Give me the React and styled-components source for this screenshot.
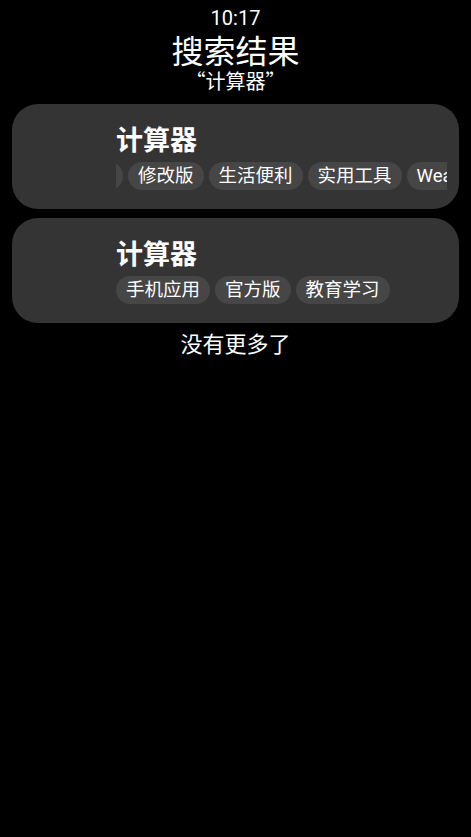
import React from "react";
import styled, { createGlobalStyle } from "styled-components";

const Global = createGlobalStyle`
  html, body {
    margin: 0;
    padding: 0;
    background: #000;
  }
  body {
    font-family: "Roboto", "Noto Sans CJK SC", sans-serif;
    color: #fff;
  }
`;

const Page = styled.div`
  display: flex;
  flex-direction: column;
  align-items: stretch;
  padding: 6px 12px 0;
  min-height: 837px;
  box-sizing: border-box;
`;

const Header = styled.header`
  display: flex;
  flex-direction: column;
  align-items: center;
  margin-bottom: 10px;
`;

const Clock = styled.div`
  font-size: 20px;
  line-height: 24px;
`;

const Title = styled.h1`
  margin: 0;
  font-size: 32px;
  line-height: 38px;
  font-weight: 400;
  font-family: "Noto Sans CJK SC", sans-serif;
`;

const Query = styled.div`
  font-size: 20px;
  line-height: 26px;
  font-family: "Noto Sans CJK SC", sans-serif;
`;

const List = styled.div`
  display: flex;
  flex-direction: column;
  gap: 9px;
`;

const Card = styled.div`
  display: flex;
  background: #343434;
  border-radius: 26px;
  padding: 20px 12px 19px 0;
`;

const IconSlot = styled.div`
  width: 104px;
  flex-shrink: 0;
`;

const Body = styled.div`
  flex: 1;
  min-width: 0;
  display: flex;
  flex-direction: column;
  gap: 8px;
`;

const AppName = styled.div`
  font-size: 27px;
  line-height: 30px;
  font-weight: 700;
  font-family: "Noto Sans CJK SC", sans-serif;
`;

const TagViewport = styled.div`
  overflow: hidden;
`;

const TagRow = styled.div`
  display: flex;
  gap: 5px;
  margin-left: ${(p) => -p.offset || 0}px;
`;

const Tag = styled.span`
  flex-shrink: 0;
  height: 28px;
  line-height: 28px;
  padding: 0 10px;
  border-radius: 14px;
  background: #464646;
  font-size: 18.5px;
  white-space: nowrap;
`;

const Footer = styled.div`
  text-align: center;
  font-size: 22px;
  line-height: 28px;
  margin-top: 5px;
  font-family: "Noto Sans CJK SC", sans-serif;
`;

const results = [
  { name: "计算器", tags: ["手机应用", "修改版", "生活便利", "实用工具", "Wear OS"], offset: 87 },
  { name: "计算器", tags: ["手机应用", "官方版", "教育学习"], offset: 0 },
];

const App = () => {
  return (
    <>
      <Global />
      <Page>
        <Header>
          <Clock>10:17</Clock>
          <Title>搜索结果</Title>
          <Query>“计算器”</Query>
        </Header>
        <List>
          {results.map((r, i) => (
            <Card key={i}>
              <IconSlot />
              <Body>
                <AppName>{r.name}</AppName>
                <TagViewport>
                  <TagRow offset={r.offset}>
                    {r.tags.map((t) => (
                      <Tag key={t}>{t}</Tag>
                    ))}
                  </TagRow>
                </TagViewport>
              </Body>
            </Card>
          ))}
        </List>
        <Footer>没有更多了</Footer>
      </Page>
    </>
  );
};

export default App;
